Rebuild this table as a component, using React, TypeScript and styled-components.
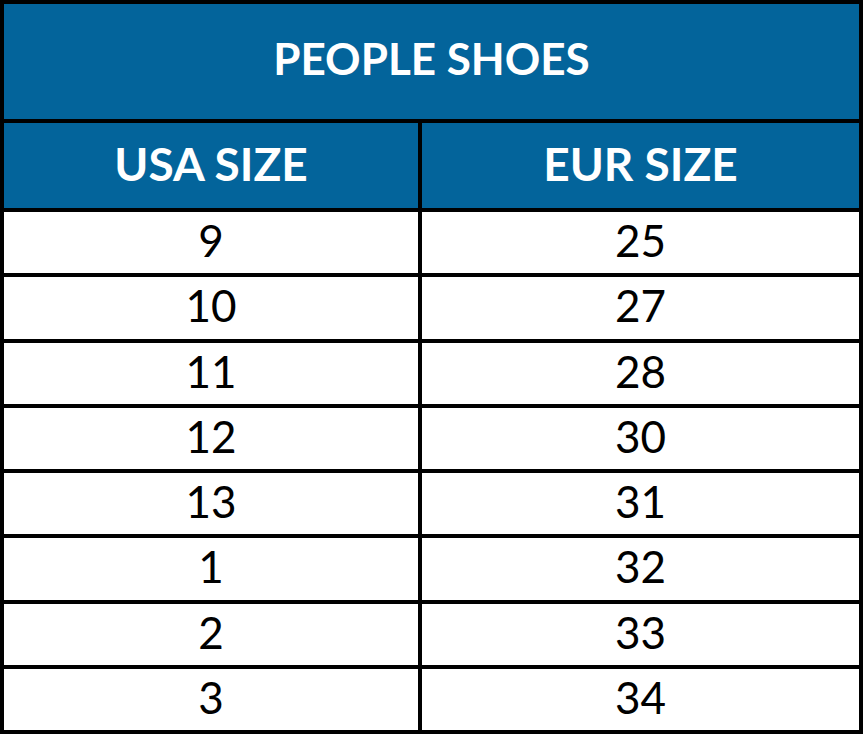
import React from "react";
import styled, { createGlobalStyle } from "styled-components";

const Global = createGlobalStyle`
  html, body { margin: 0; padding: 0; background: #ffffff; }
  body { font-family: Lato, "Open Sans", "Liberation Sans", sans-serif; }
`;

const Table = styled.div`
  width: 863px;
  height: 734px;
  box-sizing: border-box;
  display: grid;
  grid-template-columns: 414px 437px;
  grid-template-rows: 115px 85px repeat(8, 1fr);
  gap: 4px;
  padding: 4px;
  background: #000000;
`;

const Title = styled.div`
  grid-column: 1 / span 2;
  background: #03649b;
  color: #ffffff;
  font-weight: 700;
  font-size: 44px;
  display: flex;
  align-items: center;
  justify-content: center;
  padding-bottom: 8px;
  box-sizing: border-box;
`;

const HeadCell = styled.div`
  background: #03649b;
  color: #ffffff;
  font-weight: 700;
  font-size: 46px;
  display: flex;
  align-items: center;
  justify-content: center;
  padding-bottom: 5px;
  box-sizing: border-box;
`;

const Cell = styled.div`
  background: #ffffff;
  color: #000000;
  font-weight: 400;
  font-size: 44px;
  display: flex;
  align-items: center;
  justify-content: center;
  padding-bottom: 5px;
  box-sizing: border-box;
`;

const rows: [string, string][] = [
  ["9", "25"],
  ["10", "27"],
  ["11", "28"],
  ["12", "30"],
  ["13", "31"],
  ["1", "32"],
  ["2", "33"],
  ["3", "34"],
];

export default function App() {
  return (
    <>
      <Global />
      <Table>
        <Title>PEOPLE SHOES</Title>
        <HeadCell>USA SIZE</HeadCell>
        <HeadCell>EUR SIZE</HeadCell>
        {rows.map(([usa, eur]) => (
          <React.Fragment key={usa}>
            <Cell>{usa}</Cell>
            <Cell>{eur}</Cell>
          </React.Fragment>
        ))}
      </Table>
    </>
  );
}
